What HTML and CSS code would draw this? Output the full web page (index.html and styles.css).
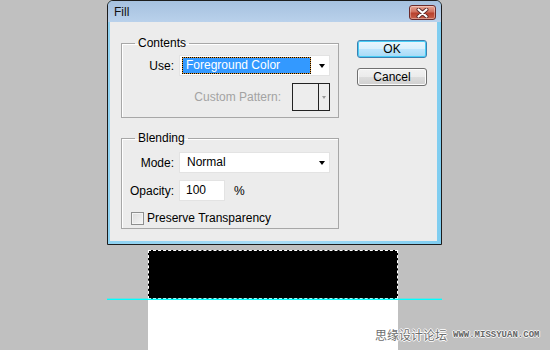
FILE: index.html
```html
<!DOCTYPE html>
<html>
<head>
<meta charset="utf-8">
<title>Fill</title>
<link rel="stylesheet" href="styles.css">
</head>
<body>
<div class="stage">
  <div class="dialog">
    <div class="titlebar">
      <span class="title">Fill</span>
      <span class="close">
        <svg width="13" height="10" viewBox="0 0 13 10"><path d="M2.5 1.5 L10.5 8.5 M10.5 1.5 L2.5 8.5" stroke="#5a2a2a" stroke-width="4" stroke-linecap="round"/><path d="M2.5 1.5 L10.5 8.5 M10.5 1.5 L2.5 8.5" stroke="#fff" stroke-width="2.2" stroke-linecap="round"/></svg>
      </span>
    </div>
    <div class="client">
      <div class="groups">
        <fieldset class="group contents">
          <legend>Contents</legend>
          <div class="row">
            <span class="lbl">Use:</span>
            <div class="select">
              <span class="sel-text focused">Foreground Color</span>
              <span class="arrow"></span>
            </div>
          </div>
          <div class="row pattern-row">
            <span class="disabled">Custom Pattern:</span>
            <div class="pattern">
              <span class="swatch"></span>
              <span class="pattern-btn"><span class="arrow small"></span></span>
            </div>
          </div>
        </fieldset>
        <fieldset class="group blending">
          <legend>Blending</legend>
          <div class="row mode-row">
            <span class="lbl">Mode:</span>
            <div class="select">
              <span class="sel-text">Normal</span>
              <span class="arrow"></span>
            </div>
          </div>
          <div class="row opacity-row">
            <span class="lbl">Opacity:</span>
            <div class="input">100</div>
            <span class="pct">%</span>
          </div>
          <div class="row check-row">
            <span class="checkbox"></span>
            <span class="check-label">Preserve Transparency</span>
          </div>
        </fieldset>
      </div>
      <div class="buttons">
        <button class="btn ok">OK</button>
        <button class="btn">Cancel</button>
      </div>
    </div>
  </div>
  <div class="canvas">
    <div class="selection"></div>
    <div class="paper"></div>
  </div>
</div>
<div class="guide"></div>
<div class="watermark"><span class="wm-cn">思缘设计论坛</span><span class="wm-en">WWW.MISSYUAN.COM</span></div>
</body>
</html>
```

FILE: styles.css
```css
* { box-sizing: border-box; }
html, body { margin: 0; padding: 0; }
body {
  width: 550px;
  height: 350px;
  overflow: hidden;
  position: relative;
  background: #c0c0c0;
  font-family: "Liberation Sans", Arial, sans-serif;
  font-size: 12px;
  color: #000;
}
.stage { display: flex; flex-direction: column; }

.dialog {
  margin-left: 107px;
  width: 335px;
  height: 245px;
  border: 1px solid #1c1c1c;
  border-radius: 6px 6px 0 0;
  background: linear-gradient(90deg, #8fd2f1, #a9dcf5 50%, #7fcdf0);
  display: flex;
  flex-direction: column;
  overflow: hidden;
}
.titlebar {
  flex: none;
  height: 21px;
  background: linear-gradient(#a6c1df, #b9d1eb);
  display: flex;
  align-items: center;
  justify-content: space-between;
  padding: 1px 5px 0 6px;
}
.title { font-size: 12px; color: #111; }
.close {
  width: 27px;
  height: 15px;
  margin-top: 1px;
  border: 1px solid #6b2b2b;
  border-radius: 3px;
  background: linear-gradient(#e8a796, #d0705e 45%, #b8412e 55%, #c9604a);
  display: flex;
  align-items: center;
  justify-content: center;
  box-shadow: inset 0 0 0 1px rgba(255,255,255,0.35);
}
.client {
  flex: 1;
  margin: 0 4px 3px 2px;
  background: #ececec;
  display: flex;
  padding: 14px 0 0 11px;
}

.groups { width: 218px; display: flex; flex-direction: column; }
.group {
  margin: 0;
  padding: 0 8px 0 0;
  border: 1px solid #a7a7a7;
  box-shadow: inset 1px 1px 0 #fff;
  min-width: 0;
}
.group legend {
  margin-left: 13px;
  padding: 0 3px;
  line-height: 14px;
}
.contents { padding-bottom: 6px; }
.blending { margin-top: 13px; padding-bottom: 3px; }

.row { display: flex; align-items: center; margin-top: 5px; }
.lbl { width: 52px; margin-right: 5px; text-align: right; white-space: nowrap; }

.select {
  width: 151px;
  height: 21px;
  background: #fff;
  border: 1px solid #e3e3e3;
  display: flex;
  align-items: center;
  padding: 1px 0 1px 2px;
}
.sel-text {
  width: 129px;
  height: 17px;
  line-height: 15px;
  padding-left: 3px;
  border: 1px solid transparent;
}
.sel-text.focused {
  color: #fff;
  border: 1px dotted #000;
  background: linear-gradient(#3399ff, #3399ff) padding-box, #e09a3a border-box;
}
.arrow {
  margin-left: 8px;
  width: 0;
  height: 0;
  border-left: 3.5px solid transparent;
  border-right: 3.5px solid transparent;
  border-top: 4px solid #000;
}
.arrow.small {
  margin: 0;
  border-left-width: 2.5px;
  border-right-width: 2.5px;
  border-top: 3px solid #9a9a9a;
}

.pattern-row { justify-content: flex-end; margin-top: 7px; }
.disabled { color: #a3a3a3; margin-right: 11px; }
.pattern {
  width: 38px;
  height: 28px;
  border: 1px solid #222;
  display: flex;
  background: #ededed;
}
.swatch { width: 26px; border-right: 1px solid #222; }
.pattern-btn { flex: 1; display: flex; align-items: center; justify-content: center; }

.mode-row { margin-top: 7px; }
.mode-row .sel-text { padding-left: 4px; }
.opacity-row { margin-top: 7px; }
.input {
  width: 46px;
  height: 21px;
  background: #fff;
  border: 1px solid #e3e3e3;
  line-height: 19px;
  padding-left: 6px;
}
.pct { margin-left: 9px; }
.check-row { margin-top: 10px; padding-left: 9px; height: 14px; }
.checkbox {
  width: 13px;
  height: 13px;
  border: 1px solid #8e8f8f;
  background: linear-gradient(135deg, #dcdcdc, #f6f6f6);
  box-shadow: inset 0 0 0 1px #f4f4f4;
  margin-right: 3px;
}

.buttons {
  margin-left: 18px;
  margin-top: 4px;
  display: flex;
  flex-direction: column;
  gap: 10px;
}
.btn {
  width: 70px;
  height: 18px;
  padding: 0;
  margin: 0;
  font: inherit;
  font-size: 12px;
  line-height: 16px;
  color: #000;
  border: 1px solid #707070;
  border-radius: 3px;
  background: linear-gradient(#f2f2f2, #ebebeb 50%, #dddddd 51%, #cfcfcf);
  box-shadow: inset 0 0 0 1px #fcfcfc;
}
.btn.ok {
  border-color: #3c7fb1;
  background: linear-gradient(#eaf6fd, #d9f0fc 50%, #bee6fd 51%, #a7d9f5);
  box-shadow: inset 0 0 0 1px #48cdf5;
}

.canvas { margin-top: 5px; margin-left: 148px; width: 250px; }
.selection { height: 49px; background: #000; border: 1px dashed #fff; }
.paper { height: 60px; background: #fff; }

.guide {
  position: absolute;
  z-index: 2;
  left: 107px;
  top: 298px;
  width: 335px;
  height: 2px;
  border-bottom: 1px solid #00ffff;
  background: rgba(0, 255, 255, 0.35);
}

.watermark {
  position: absolute;
  z-index: 3;
  left: 375px;
  top: 327px;
  display: flex;
  align-items: center;
  gap: 6px;
}
.wm-cn {
  font-family: "Noto Sans CJK SC", sans-serif;
  font-size: 12px;
  line-height: 16px;
  color: #6e6e6e;
  text-shadow: 1px 0 #fff, -1px 0 #fff, 0 1px #fff, 0 -1px #fff;
}
.wm-en {
  font-family: "Liberation Mono", monospace;
  font-size: 9px;
  font-weight: bold;
  color: #666;
  text-shadow: 1px 0 #f4f4f4, -1px 0 #f4f4f4, 0 1px #f4f4f4, 0 -1px #f4f4f4;
}
```
